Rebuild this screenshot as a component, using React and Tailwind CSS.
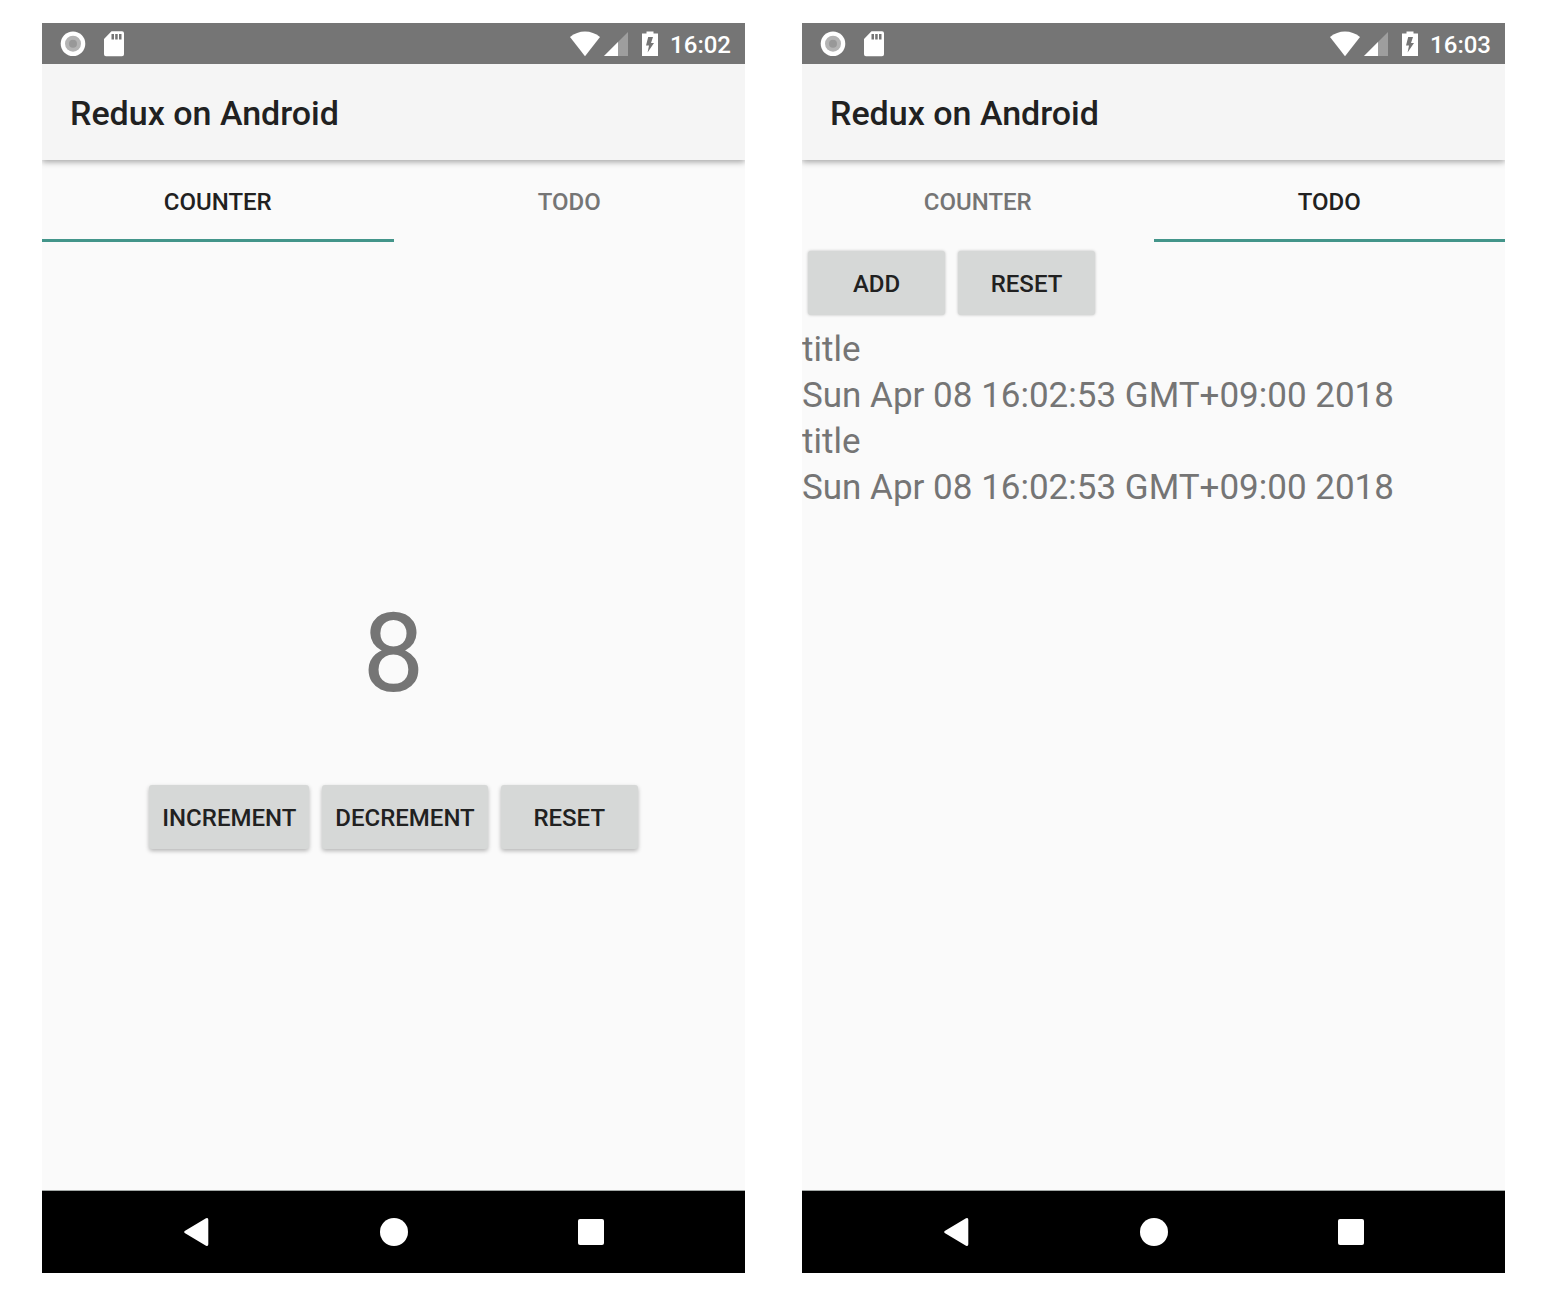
import { useState } from "react";

function StatusBar({ time }) {
  return (
    <div className="relative z-20 flex h-[41px] items-center justify-between bg-[#757575] pl-[18px] pr-[14px] text-white">
      <div className="flex items-center gap-[18px]">
        <svg width="26" height="26" viewBox="0 0 26 26" aria-hidden="true">
          <circle cx="13" cy="12.700" r="12.300" fill="#fff" />
          <circle cx="13" cy="12.700" r="8" fill="#b3b3b3" />
          <circle cx="13" cy="12.700" r="4" fill="#989898" />
        </svg>
        <svg width="20" height="26" viewBox="0 0 20 26" aria-hidden="true">
          <path fill="#fff" d="M7.500 .3H18a2 2 0 0 1 2 2v21a2 2 0 0 1-2 2H2a2 2 0 0 1-2-2V8z" />
          <path fill="#757575" d="M7.500 3h2.500v5.500H7.500zM11.200 3h2.500v5.500h-2.500zM15 3h2.500v5.500H15z" />
        </svg>
      </div>
      <div className="flex items-center">
        <svg width="30" height="26" viewBox="0 0 30 26" aria-hidden="true">
          <path fill="#fff" d="M15 25.200 0 6C4.500 2.400 9.500 .5 15 .5s10.500 1.900 15 5.500z" />
        </svg>
        <svg className="ml-1" width="24" height="26" viewBox="0 0 24 26" aria-hidden="true">
          <path fill="#9e9e9e" d="M24 1V25H0z" />
          <path fill="#fff" d="M14 11V25H0z" />
        </svg>
        <svg className="ml-[14px]" width="16" height="26" viewBox="0 0 16 26" aria-hidden="true">
          <path fill="#fff" d="M4.500 .4h7v2.200H16v22.500H0V2.600h4.500z" />
          <path fill="#757575" d="M6.200 6H11L9 12h3L5.600 21.500 7 14.500H4z" />
        </svg>
        <span className="ml-3 pt-[2px] text-[24px] leading-[30px] font-medium">{time}</span>
      </div>
    </div>
  );
}

function NavigationBar() {
  const item = "flex h-full w-[197px] items-center justify-center";
  return (
    <nav className="flex h-[83px] justify-center border-t border-[#a3a8a6] bg-black">
      <button type="button" aria-label="Back" className={item}>
        <svg width="26" height="28" viewBox="0 0 26 28" aria-hidden="true">
          <path fill="#fff" d="M.7 13.100 22 .3q2.300-1 2.300 1.500v24.400q0 2.500-2.300 1.500L.7 14.900q-1-.9 0-1.800z" />
        </svg>
      </button>
      <button type="button" aria-label="Home" className={item}>
        <span className="size-7 rounded-full bg-white" />
      </button>
      <button type="button" aria-label="Overview" className={item}>
        <span className="size-[26px] rounded-[2px] bg-white" />
      </button>
    </nav>
  );
}

function RaisedButton({ onClick, flat, children }) {
  return (
    <button
      type="button"
      onClick={onClick}
      className={`h-16 min-w-[137px] rounded-[3px] bg-[#d6d8d7] px-[13px] pt-[2px] text-[24px] leading-[28px] font-medium text-[#212121] ${
        flat ? "shadow-[0_0_3px_rgba(0,0,0,0.25)]" : "shadow-[0_2px_4px_rgba(0,0,0,0.28)]"
      }`}
    >
      {children}
    </button>
  );
}

function Counter() {
  const [count, setCount] = useState(8);
  return (
    <div className="flex flex-1 flex-col items-center justify-center gap-[67px] pt-[6px]">
      <output className="text-[110px] leading-[128px] text-[#757575]">{count}</output>
      <div className="flex gap-[13px]">
        <RaisedButton onClick={() => setCount(count + 1)}>INCREMENT</RaisedButton>
        <RaisedButton onClick={() => setCount(count - 1)}>DECREMENT</RaisedButton>
        <RaisedButton onClick={() => setCount(0)}>RESET</RaisedButton>
      </div>
    </div>
  );
}

const entry = { title: "title", date: "Sun Apr 08 16:02:53 GMT+09:00 2018" };

function Todo() {
  const [todos, setTodos] = useState([entry, entry]);
  return (
    <div className="flex-1">
      <div className="flex gap-[13px] px-[6px] pt-[9px] pb-3">
        <RaisedButton flat onClick={() => setTodos([...todos, entry])}>ADD</RaisedButton>
        <RaisedButton flat onClick={() => setTodos([])}>RESET</RaisedButton>
      </div>
      <ul className="text-[35px] leading-[46px] text-[#757575]">
        {todos.map((todo, i) => (
          <li key={i}>
            <p>{todo.title}</p>
            <p>{todo.date}</p>
          </li>
        ))}
      </ul>
    </div>
  );
}

function Phone({ time, initialTab }) {
  const [tab, setTab] = useState(initialTab);
  return (
    <section className="flex flex-col overflow-hidden bg-[#fafafa]">
      <StatusBar time={time} />
      <header className="z-10 flex h-24 items-center bg-[#f5f5f5] px-7 pt-[2px] shadow-[0_2px_6px_rgba(0,0,0,0.35)]">
        <h1 className="text-[34px] leading-[40px] font-medium text-[#212121]">Redux on Android</h1>
      </header>
      <div role="tablist" className="grid h-[82px] grid-cols-2">
        {["COUNTER", "TODO"].map((name) => (
          <button
            key={name}
            type="button"
            role="tab"
            aria-selected={tab === name}
            onClick={() => setTab(name)}
            className={`border-b-[3px] pt-[5px] text-[24px] leading-[28px] font-medium ${
              tab === name ? "border-[#43958a] text-[#212121]" : "border-transparent text-[#757575]"
            }`}
          >
            {name}
          </button>
        ))}
      </div>
      {tab === "COUNTER" ? <Counter /> : <Todo />}
      <NavigationBar />
    </section>
  );
}

export default function App() {
  return (
    <main className="grid min-h-screen grid-cols-2 gap-[57px] bg-white pt-[23px] pr-[37px] pb-[21px] pl-[42px] font-[Roboto,sans-serif]">
      <Phone time="16:02" initialTab="COUNTER" />
      <Phone time="16:03" initialTab="TODO" />
    </main>
  );
}
